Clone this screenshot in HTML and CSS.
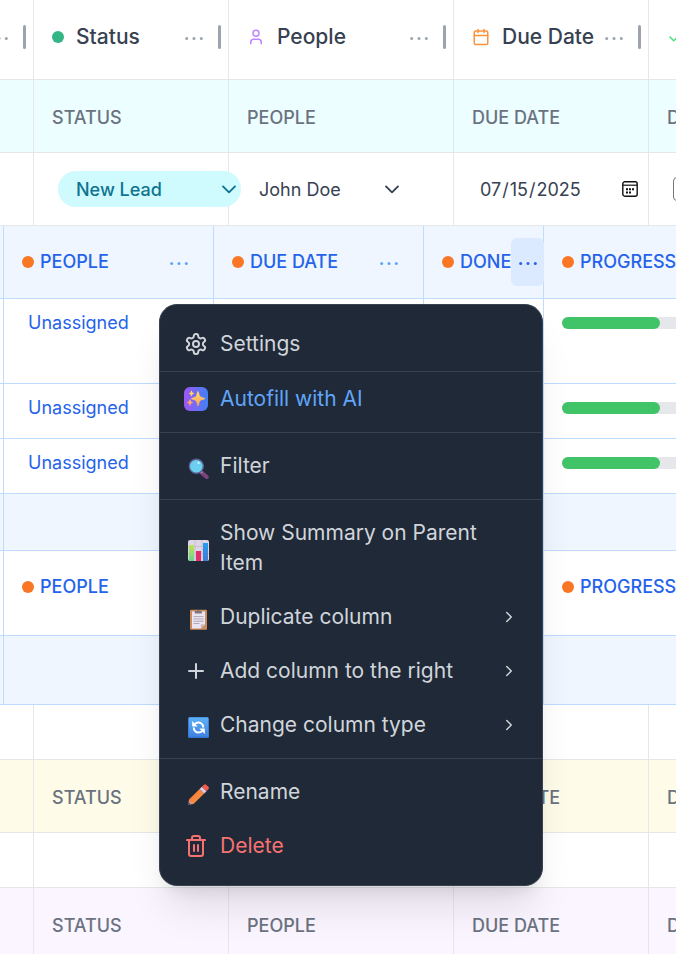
FILE: index.html
```html
<!DOCTYPE html>
<html lang="en-US">
<head>
<meta charset="utf-8">
<title>Leads board</title>
<link rel="stylesheet" href="styles.css">
</head>
<body>
<svg class="sprite" aria-hidden="true">
  <symbol id="dots" viewBox="0 0 33 48"><circle cx="9.700" cy="25.500" r="1.500"/><circle cx="17" cy="25.500" r="1.500"/><circle cx="24.300" cy="25.500" r="1.500"/></symbol>
  <symbol id="chevron-down" viewBox="0 0 24 24"><path d="m4 8.500 8 8 8-8"/></symbol>
  <symbol id="chevron-right" viewBox="0 0 24 24"><path d="m9 18 6-6-6-6"/></symbol>
</svg>
<main class="board">
  <table class="grid">
    <colgroup><col class="c-lead"><col class="c-status"><col class="c-people"><col class="c-date"><col></colgroup>
    <thead>
      <tr class="head">
        <th><div class="head-cell"><button class="more" aria-label="Item column menu"><svg><use href="#dots"/></svg></button></div><span class="resize"></span></th>
        <th><div class="head-cell"><span class="dot green"></span>Status<button class="more" aria-label="Status column menu"><svg><use href="#dots"/></svg></button></div><span class="resize"></span></th>
        <th><div class="head-cell"><svg class="ico purple" viewBox="0 0 24 24"><path d="M19 21v-2a4 4 0 0 0-4-4H9a4 4 0 0 0-4 4v2"/><circle cx="12" cy="7" r="4"/></svg>People<button class="more" aria-label="People column menu"><svg><use href="#dots"/></svg></button></div><span class="resize"></span></th>
        <th><div class="head-cell"><svg class="ico orange" viewBox="0 0 24 24"><path d="M8 2v4M16 2v4M3 10h18"/><rect x="3" y="4" width="18" height="18" rx="2"/></svg>Due Date<button class="more" aria-label="Due Date column menu"><svg><use href="#dots"/></svg></button></div><span class="resize"></span></th>
        <th class="clip"><div class="head-cell"><svg class="ico lime" viewBox="0 0 24 24"><path d="M20 6 9 17l-5-5"/></svg>Done</div></th>
      </tr>
    </thead>
    <tbody>
      <tr class="group cyan"><td></td><td>STATUS</td><td>PEOPLE</td><td>DUE DATE</td><td class="clip">DONE</td></tr>
      <tr class="item">
        <td></td>
        <td><div class="pick status-pick"><select aria-label="Status"><option>New Lead</option></select><svg><use href="#chevron-down"/></svg></div></td>
        <td><div class="pick people-pick"><select aria-label="People"><option>John Doe</option></select><svg><use href="#chevron-down"/></svg></div></td>
        <td><div class="date"><input type="date" value="2025-07-15" aria-label="Due date"><svg viewBox="0 0 16 16"><rect x=".8" y=".8" width="14.400" height="14.400" rx="2" fill="none" stroke="#111" stroke-width="1.400"/><path d="M1 4.200h14" stroke="#111" stroke-width="1.200"/><path d="M4 7.200h2v2H4zM7 7.200h2v2H7zM10 7.200h2v2h-2zM4 10.600h2v2H4zM7 10.600h2v2H7z" fill="#111"/></svg></div></td>
        <td class="clip"><input class="tick" type="checkbox" aria-label="Done"></td>
      </tr>
      <tr>
        <td class="nest" colspan="5">
          <table class="sub">
            <colgroup><col class="s-lead"><col class="s-wide"><col class="s-wide"><col class="s-done"><col></colgroup>
            <thead>
              <tr class="sub-head tint">
                <th></th>
                <th><div class="sub-cell"><span class="dot"></span>PEOPLE<button class="more" aria-label="People menu"><svg><use href="#dots"/></svg></button></div></th>
                <th><div class="sub-cell"><span class="dot"></span>DUE DATE<button class="more" aria-label="Due date menu"><svg><use href="#dots"/></svg></button></div></th>
                <th><div class="sub-cell"><span class="dot"></span>DONE<button class="more open" aria-label="Done menu" aria-expanded="true"><svg><use href="#dots"/></svg></button></div></th>
                <th class="clip"><div class="sub-cell"><span class="dot"></span>PROGRESS</div></th>
              </tr>
            </thead>
            <tbody>
              <tr class="tall"><td></td><td><button class="assign">Unassigned</button></td><td></td><td></td><td class="clip"><div class="track"><div class="fill"></div></div></td></tr>
              <tr class="short"><td></td><td><button class="assign">Unassigned</button></td><td></td><td></td><td class="clip"><div class="track"><div class="fill"></div></div></td></tr>
              <tr class="short"><td></td><td><button class="assign">Unassigned</button></td><td></td><td></td><td class="clip"><div class="track"><div class="fill"></div></div></td></tr>
              <tr class="add tint"><td></td><td></td><td></td><td></td><td></td></tr>
              <tr class="tall"><td></td><td><div class="sub-cell"><span class="dot"></span>PEOPLE</div></td><td></td><td></td><td class="clip"><div class="sub-cell"><span class="dot"></span>PROGRESS</div></td></tr>
              <tr class="foot tint"><td></td><td></td><td></td><td></td><td></td></tr>
            </tbody>
          </table>
        </td>
      </tr>
      <tr class="blank"><td></td><td></td><td></td><td></td><td></td></tr>
      <tr class="group yellow"><td></td><td>STATUS</td><td></td><td>DUE DATE</td><td class="clip">DONE</td></tr>
      <tr class="blank"><td></td><td></td><td></td><td></td><td></td></tr>
      <tr class="group violet"><td></td><td>STATUS</td><td>PEOPLE</td><td>DUE DATE</td><td class="clip">DONE</td></tr>
    </tbody>
  </table>

  <div class="menu" role="menu">
    <div class="section">
      <button role="menuitem"><svg class="mi" viewBox="0 0 24 24"><path d="M12.220 2h-.44a2 2 0 0 0-2 2v.18a2 2 0 0 1-1 1.730l-.43.25a2 2 0 0 1-2 0l-.15-.08a2 2 0 0 0-2.730.73l-.22.38a2 2 0 0 0 .73 2.730l.15.1a2 2 0 0 1 1 1.720v.51a2 2 0 0 1-1 1.740l-.15.09a2 2 0 0 0-.73 2.730l.22.38a2 2 0 0 0 2.730.73l.15-.08a2 2 0 0 1 2 0l.43.25a2 2 0 0 1 1 1.730V20a2 2 0 0 0 2 2h.44a2 2 0 0 0 2-2v-.18a2 2 0 0 1 1-1.730l.43-.25a2 2 0 0 1 2 0l.15.08a2 2 0 0 0 2.730-.73l.22-.39a2 2 0 0 0-.73-2.730l-.15-.08a2 2 0 0 1-1-1.740v-.5a2 2 0 0 1 1-1.740l.15-.09a2 2 0 0 0 .73-2.730l-.22-.38a2 2 0 0 0-2.730-.73l-.15.08a2 2 0 0 1-2 0l-.43-.25a2 2 0 0 1-1-1.730V4a2 2 0 0 0-2-2z"/><circle cx="12" cy="12" r="3"/></svg><span>Settings</span></button>
    </div>
    <div class="section">
      <button role="menuitem" class="ai"><span class="ai-tile"><svg viewBox="0 0 24 24"><defs><linearGradient id="spark" x1="0" y1="0" x2="0" y2="1"><stop offset="0" stop-color="#ffe15a"/><stop offset="1" stop-color="#ff9a6a"/></linearGradient></defs><path fill="url(#spark)" d="M14 4c.8 0 1.300 4.300 2.200 5.300S21.300 11 21.300 11.800s-4.200 1.200-5.100 2.300S14.800 19.600 14 19.600s-1.200-4.400-2.200-5.500-5-1.500-5-2.300 4.100-1.400 5-2.500S13.200 4 14 4zM7.500 3.500c.5 0 .6 1.500 1 1.900s1.600.6 1.600 1-1.200.6-1.600 1-.5 2-1 2-.6-1.500-1-2-1.600-.6-1.600-1 1.200-.6 1.600-1 .5-1.900 1-1.900zM6 12.300c.5 0 .7 1.700 1.100 2.100s2 .7 2 1.200-1.500.7-2 1.200S6.500 19 6 19s-.6-1.700-1.100-2.200-1.900-.7-1.900-1.200 1.400-.7 1.900-1.200.6-2.100 1.100-2.100z"/></svg></span><span>Autofill with AI</span></button>
    </div>
    <div class="section">
      <button role="menuitem"><svg class="emoji" viewBox="0 0 21 21"><path d="m13.500 14.500 5.200 4.600" stroke="#7b4380" stroke-width="4" stroke-linecap="round"/><path d="m12 12.600 2.200 2.200" stroke="#a493b4" stroke-width="2"/><circle cx="8.300" cy="8.300" r="7" fill="#6bd0f0" stroke="#5b5f93" stroke-width="1.400"/><circle cx="10.600" cy="4.900" r="1.100" fill="#d9f7ff"/></svg><span>Filter</span></button>
    </div>
    <div class="section">
      <button role="menuitem"><svg class="emoji" viewBox="0 0 21 21"><defs><linearGradient id="g1" x1="0" y1="0" x2="0" y2="1"><stop offset="0" stop-color="#c3e352"/><stop offset="1" stop-color="#63d68c"/></linearGradient><linearGradient id="g2" x1="0" y1="0" x2="0" y2="1"><stop offset="0" stop-color="#259cf0"/><stop offset="1" stop-color="#4479cf"/></linearGradient></defs><rect width="21" height="21" rx="2" fill="#ded6e4"/><path d="M0 6.500h21M0 13.500h21M7 0v21M14 0v21" stroke="#c3b9cb" stroke-width=".8"/><path d="M1 5h5v16H2a1 1 0 0 1-1-1z" fill="url(#g1)"/><path d="M8 11h5v10H8z" fill="#e0306b"/><path d="M15 3h5v17a1 1 0 0 1-1 1h-4z" fill="url(#g2)"/></svg><span>Show Summary on Parent Item</span></button>
      <button role="menuitem"><svg class="emoji" viewBox="0 0 21 21"><rect x="2" y=".8" width="17" height="20" rx="1" fill="#cf8c5c"/><path d="M4 2.500h13v12.800L12.800 19.500H4z" fill="#ebe5f2"/><path d="M17 15.200h-4.200v4.300z" fill="#c5b8cc"/><path d="M6.800 4.600V2h2a1.600 1.600 0 0 1 3 0h2v2.600z" fill="#7e7481"/><path d="M5.500 7.600h10M5.500 10h10M5.500 12.300h10M5.500 14.500h6" stroke="#aaa1b3" stroke-width=".9"/></svg><span>Duplicate column</span><svg class="go"><use href="#chevron-right"/></svg></button>
      <button role="menuitem"><svg class="mi" viewBox="0 0 24 24"><path d="M12 5v14M5 12h14"/></svg><span>Add column to the right</span><svg class="go"><use href="#chevron-right"/></svg></button>
      <button role="menuitem"><svg class="emoji" viewBox="0 0 21 21"><defs><linearGradient id="g3" x1="0" y1="0" x2="0" y2="1"><stop offset="0" stop-color="#5eb0f6"/><stop offset="1" stop-color="#3f82e4"/></linearGradient></defs><rect width="21" height="21" rx="1.500" fill="#3478d4"/><rect x=".8" y=".6" width="19.400" height="19" rx="1.200" fill="url(#g3)"/><g fill="none" stroke="#fff" stroke-width="2"><path d="M6.700 7.200c2.200-2.600 6.300-2.300 8 .8.4.8.5 1.500.5 2.500"/><path d="M14.300 13.800c-2.200 2.600-6.300 2.300-8-.8-.4-.8-.5-1.500-.5-2.500"/></g><path d="M4.200 4v5.500h5.500zM16.800 17v-5.500h-5.500z" fill="#fff"/></svg><span>Change column type</span><svg class="go"><use href="#chevron-right"/></svg></button>
    </div>
    <div class="section">
      <button role="menuitem"><svg class="emoji" viewBox="0 0 21 21"><defs><linearGradient id="g4" x1="0" y1="0" x2="1" y2="1"><stop offset="0" stop-color="#fb7340"/><stop offset="1" stop-color="#f39a3d"/></linearGradient></defs><path d="M.2 20.800 1 15.600l4.400 4.300z" fill="#c9a3a0"/><path d="M.2 20.800.6 18l2.200 2.200z" fill="#5b4460"/><path d="M1 15.600 11.600 5l4.600 4.500L5.500 20c-1.500.2-4.500-2.400-4.500-4.400z" fill="url(#g4)"/><path d="m11.600 5 2.300-2.200 4.600 4.500-2.300 2.200z" fill="#dccde6"/><path d="m13.900 2.800 2-2c.8-.8 1.800-.7 2.600.1l1.800 1.800c.8.8.9 1.800.1 2.600l-1.900 2z" fill="#f35b50"/></svg><span>Rename</span></button>
      <button role="menuitem" class="danger"><svg class="mi" viewBox="0 0 24 24"><path d="M3 6h18M19 6v14c0 1-1 2-2 2H7c-1 0-2-1-2-2V6M8 6V4c0-1 1-2 2-2h4c1 0 2 1 2 2v2M10 11v6M14 11v6"/></svg><span>Delete</span></button>
    </div>
  </div>
</main>
</body>
</html>
```
FILE: styles.css
```css
* { box-sizing: border-box; }

body {
  margin: 0;
  font: 500 18px/24px Inter, "Liberation Sans", sans-serif;
  color: #374151;
  background: #fff;
}

button, select, input { font: inherit; color: inherit; }
button { border: 0; padding: 0; background: none; cursor: pointer; }
svg { display: block; flex: none; }
.sprite { position: absolute; width: 0; height: 0; }

.board { position: relative; height: 100vh; overflow: hidden; }

/* Tables */
table { width: 100%; table-layout: fixed; border-collapse: separate; border-spacing: 0; }
th, td { padding: 0; text-align: left; font-weight: 500; white-space: nowrap; vertical-align: top; }
.clip { overflow: hidden; }
.c-lead { width: 34px; }
.c-status, .c-date { width: 195px; }
.c-people { width: 225px; }
.grid > thead > tr > th,
.grid > tbody > tr > td { border-right: 1px solid #e5e7eb; border-bottom: 1px solid #e5e7eb; }
.grid > tbody > tr > td.nest { border: 0; }
.grid tr > :last-child { border-right: 0; }
.grid > thead > tr > th:last-child,
.grid > tbody > tr > td:last-child { border-right: 0; }

.head th { position: relative; height: 80px; vertical-align: middle; padding: 0 18px 5px; font-size: 21px; }
.head th:first-child { padding-left: 0; }
.head-cell, .sub-cell { display: flex; align-items: center; }
.head-cell > :first-child:not(.more) { margin-right: 12px; }
.head th:first-child .head-cell { justify-content: flex-end; }
.ico { width: 18px; height: 18px; fill: none; stroke: currentColor; stroke-width: 2; stroke-linecap: round; stroke-linejoin: round; }
.purple { color: #c084fc; }
.orange { color: #fb923c; }
.lime { color: #4ade80; }
.dot { flex: none; width: 12px; height: 12px; border-radius: 50%; background: #f97624; }
.dot.green { background: #34b585; }
.more { flex: none; margin-left: auto; width: 33px; height: 48px; border-radius: 6px; color: #9ca3af; }
.more svg { width: 33px; height: 48px; fill: currentColor; }
.resize { position: absolute; top: 25px; right: 7px; width: 3px; height: 24px; border-radius: 2px; background: #9ca3af; }

.group td { height: 73px; padding: 26px 18px 0; color: #6b7280; }
.cyan { background: #ecfeff; }
.yellow { background: #fefce8; }
.violet { background: #faf5ff; }
.blank td { height: 55px; }

.item td { height: 73px; vertical-align: middle; }
.pick, .date { position: relative; display: flex; align-items: center; height: 36px; }
.pick select, .date input { width: 100%; height: 36px; padding: 2px 0 0; border: 0; background: none; outline: 0; }
.pick select { appearance: none; }
.pick svg { position: absolute; right: 3px; width: 18px; height: 18px; fill: none; stroke: currentColor; stroke-width: 2.5; stroke-linecap: round; stroke-linejoin: round; pointer-events: none; }
.status-pick { z-index: 1; width: 183px; margin-left: 24px; color: #0e7490; }
.status-pick select { padding-inline: 18px; border-radius: 18px; background: #cffafe; }
.people-pick { width: 145px; margin-left: 30px; font-weight: 400; }
.date { font-weight: 400; }
.date input { padding-inline: 25px 9px; }
.date input::-webkit-calendar-picker-indicator { opacity: 0; }
.date svg { position: absolute; right: 10px; width: 16px; height: 16px; pointer-events: none; }
.tick { appearance: none; display: block; width: 24px; height: 24px; margin: 0 0 0 24px; border: 1px solid #767676; border-radius: 4px; background: #fff; }

/* Nested items */
.sub th, .sub td { border-right: 1px solid #bfdbfe; border-bottom: 1px solid #bfdbfe; }
.s-lead { width: 4px; }
.s-wide { width: 210px; }
.s-done { width: 120px; }
.tint { background: #eff6ff; }
.sub tr > :last-child { border-right: 0; }
.sub-cell { gap: 6px; height: 72px; padding: 0 18px; color: #2563eb; }
.sub-cell .more { color: #60a5fa; }
.sub-cell .more.open { position: relative; margin-left: -6px; background: #dbeafe; color: #2563eb; }
.tall td { height: 85px; }
.short td { height: 55px; }
.add td { height: 57px; }
.foot td { height: 69px; }
.assign { display: block; height: 24px; margin: 12px 0 0 24px; color: #2563eb; font-weight: 400; }
.track { width: 140px; height: 12px; margin: 18px 0 0 18px; border-radius: 6px; background: #e5e7eb; }
.fill { width: 70%; height: 100%; border-radius: 6px; background: #41c468; }

/* Column menu */
.menu {
  position: absolute;
  top: 304px;
  left: 159px;
  z-index: 2;
  width: 384px;
  padding: 6px 0;
  border: 1px solid #374151;
  border-radius: 18px;
  background: #1f2937;
  color: #d1d5db;
  font-size: 21px;
  line-height: 30px;
  font-weight: 400;
  box-shadow: 0 30px 38px -8px rgba(0, 0, 0, .1), 0 12px 15px -9px rgba(0, 0, 0, .1);
}
.section { padding: 6px 0; }
.section + .section { border-top: 1px solid #374151; }
.section:first-child { padding-bottom: 0; }
.section:nth-child(2) { padding-top: 0; }
.menu button { display: flex; align-items: center; width: 100%; padding: 12px 24px; gap: 12px; text-align: left; }
.menu .ai { color: #60a5fa; }
.menu .danger { color: #f87171; }
.mi { width: 24px; height: 24px; fill: none; stroke: currentColor; stroke-width: 2; stroke-linecap: round; stroke-linejoin: round; }
.emoji { width: 21px; height: 21px; margin: 5px -1px 0 4px; fill: none; }
.ai-tile { width: 24px; height: 24px; border-radius: 6px; background: linear-gradient(90deg, #a055f5, #3f82f6); }
.go { width: 18px; height: 18px; margin-left: auto; fill: none; stroke: currentColor; stroke-width: 2; stroke-linecap: round; stroke-linejoin: round; }
```
